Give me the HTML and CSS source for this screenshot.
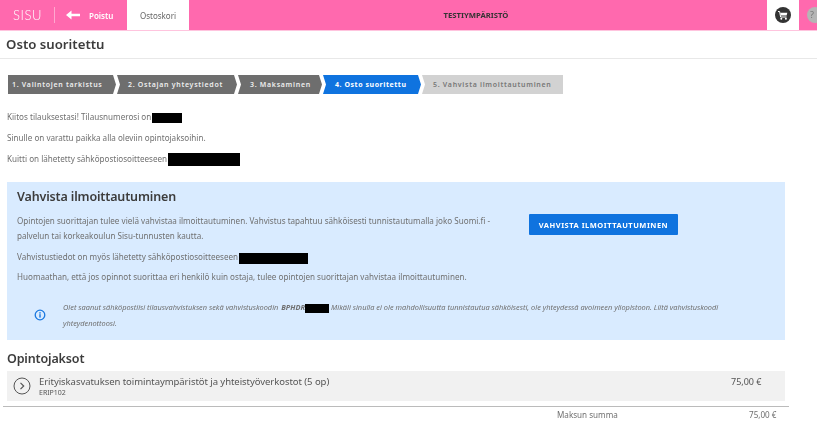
FILE: index.html
```html
<!DOCTYPE html>
<html>
<head>
    <meta charset="UTF-8">
    <meta name="viewport" content="width=device-width, initial-scale=1.0">
    <title>Osto suoritettu</title>
    <link rel="stylesheet" href="styles.css">
</head>
<body>
    <header class="topbar">
        <div class="logo">SISU</div>
        <a class="back">
            <svg width="14" height="10" viewBox="0 0 14 10"><path d="M0 5 L5.5 0.5 V3.8 H14 V6.2 H5.5 V9.5 Z" fill="#fff"/></svg>
            <span>Poistu</span>
        </a>
        <a class="tab">Ostoskori</a>
        <div class="env">TESTIYMPÄRISTÖ</div>
        <a class="cart">
            <svg width="16" height="16" viewBox="0 0 16 16">
                <circle cx="8" cy="8" r="8" fill="#333"/>
                <path d="M3 4.5 H4.6 L5.6 10 H11.6" fill="none" stroke="#fff" stroke-width="1"/>
                <path d="M5.2 5.7 H12.3 L11.6 8.4 H5.7 Z" fill="#fff"/>
                <circle cx="6.3" cy="11.8" r="1" fill="#fff"/>
                <circle cx="10.9" cy="11.8" r="1" fill="#fff"/>
            </svg>
        </a>
        <div class="help">?</div>
    </header>

    <h1 class="page-title">Osto suoritettu</h1>

    <main class="content">
        <ol class="steps">
            <li class="step done first">1. Valintojen tarkistus</li>
            <li class="step done second">2. Ostajan yhteystiedot</li>
            <li class="step done third">3. Maksaminen</li>
            <li class="step active">4. Osto suoritettu</li>
            <li class="step todo">5. Vahvista ilmoittautuminen</li>
        </ol>

        <section class="thanks">
            <p>Kiitos tilauksestasi! Tilausnumerosi on<span class="redact r-order"></span></p>
            <p>Sinulle on varattu paikka alla oleviin opintojaksoihin.</p>
            <p>Kuitti on lähetetty sähköpostiosoitteeseen <span class="redact r-mail"></span></p>
        </section>

        <section class="confirm">
            <h2>Vahvista ilmoittautuminen</h2>
            <div class="confirm-top">
                <div class="confirm-text">
                    <p>Opintojen suorittajan tulee vielä vahvistaa ilmoittautuminen. Vahvistus tapahtuu sähköisesti tunnistautumalla joko Suomi.fi -palvelun tai korkeakoulun Sisu-tunnusten kautta.</p>
                </div>
                <button class="confirm-btn">VAHVISTA ILMOITTAUTUMINEN</button>
            </div>
            <p class="gap">Vahvistustiedot on myös lähetetty sähköpostiosoitteeseen <span class="redact r-mail2"></span></p>
            <p class="gap last">Huomaathan, että jos opinnot suorittaa eri henkilö kuin ostaja, tulee opintojen suorittajan vahvistaa ilmoittautuminen.</p>
            <div class="notice">
                <svg class="notice-icon" width="12" height="12" viewBox="0 0 12 12">
                    <circle cx="6" cy="6" r="4.8" fill="none" stroke="#1a78e0" stroke-width="1.3"/>
                    <rect x="5.3" y="3.2" width="1.4" height="1.4" fill="#1a78e0"/>
                    <rect x="5.3" y="5.2" width="1.4" height="3.4" fill="#1a78e0"/>
                </svg>
                <p>Olet saanut sähköpostiisi tilausvahvistuksen sekä vahvistuskoodin <b>BPHDR</b><span class="redact r-code"></span> Mikäli sinulla ei ole mahdollisuutta tunnistautua sähköisesti, ole yhteydessä avoimeen yliopistoon. Liitä vahvistuskoodi yhteydenottoosi.</p>
            </div>
        </section>

        <h2 class="courses-title">Opintojaksot</h2>
        <div class="course">
            <span class="expand">
                <svg width="18" height="18" viewBox="0 0 18 18">
                    <circle cx="9" cy="9" r="8" fill="none" stroke="#555" stroke-width="1"/>
                    <path d="M7.5 5.8 L10.7 9 L7.5 12.2" fill="none" stroke="#555" stroke-width="1.2"/>
                </svg>
            </span>
            <div class="course-info">
                <div class="course-name">Erityiskasvatuksen toimintaympäristöt ja yhteistyöverkostot (5 op)</div>
                <div class="course-code">ERIP102</div>
            </div>
            <div class="course-price">75,00 €</div>
        </div>
        <div class="total">
            <span class="total-label">Maksun summa</span>
            <span class="total-value">75,00 €</span>
        </div>
    </main>
</body>
</html>
```

FILE: styles.css
```css
body {
    margin: 0;
    height: 425px;
    overflow: hidden;
    font-family: "Noto Sans", sans-serif;
    color: #707070;
    background: #fff;
    font-size: 8.1px;
    filter: blur(0.4px);
}
p {
    margin: 0;
}
.topbar {
    display: flex;
    align-items: stretch;
    height: 30px;
    background: #ff69ae;
    border-bottom: 1px solid #ffc4de;
    color: #fff;
}
.logo {
    width: 41px;
    margin: 7px 0 7px 13px;
    border-right: 1px solid #ffa8cf;
    font-size: 13px;
    line-height: 16px;
    letter-spacing: 0.6px;
    font-weight: 300;
    font-family: "Lato", sans-serif;
}
.back {
    display: flex;
    align-items: center;
    gap: 9px;
    margin-left: 11px;
    width: 61px;
    font-size: 8px;
    font-weight: 600;
}
.tab {
    display: flex;
    align-items: center;
    justify-content: center;
    width: 62px;
    background: #fff;
    color: #666;
    font-size: 8px;
}
.env {
    flex: 1;
    display: flex;
    align-items: center;
    justify-content: center;
    padding-right: 4px;
    color: #333;
    font-size: 7.7px;
    font-weight: 700;
}
.cart {
    display: flex;
    align-items: center;
    justify-content: center;
    width: 32px;
    background: #fff;
}
.help {
    width: 13px;
    height: 16px;
    padding-left: 3px;
    margin: 7px -6px 0 8px;
    flex: none;
    border-radius: 50%;
    background: #b5b5b5;
    color: #777;
    font-size: 9px;
    line-height: 16px;
}
.page-title {
    margin: 0;
    height: 27px;
    padding-left: 6px;
    border-bottom: 1px solid #e8e8e8;
    color: #3c3c3c;
    font-size: 13.2px;
    line-height: 27px;
    font-weight: 600;
}
.content {
    padding: 16px 32px 0 7px;
}
.steps {
    display: flex;
    gap: 1px;
    margin: 0 0 0 1px;
    padding: 0;
    list-style: none;
}
.step {
    display: flex;
    align-items: center;
    height: 19px;
    padding-left: 12px;
    box-sizing: border-box;
    font-size: 7px;
    font-weight: 600;
    letter-spacing: 0.7px;
    white-space: nowrap;
    color: #eee;
    clip-path: polygon(0 0, calc(100% - 3px) 0, 100% 50%, calc(100% - 3px) 100%, 0 100%, 3px 50%);
}
.done {
    background: #6e6e6e;
}
.first {
    width: 108px;
    padding-left: 4px;
    clip-path: polygon(0 0, calc(100% - 3px) 0, 100% 50%, calc(100% - 3px) 100%, 0 100%);
}
.second {
    width: 120px;
    padding-left: 11px;
}
.third {
    width: 84px;
}
.active {
    width: 98px;
    background: #0f73df;
    color: #fff;
    font-weight: 700;
    letter-spacing: 0.55px;
}
.todo {
    width: 141px;
    padding-left: 11px;
    background: #d2d2d2;
    color: #777;
    clip-path: polygon(0 0, 100% 0, 100% 100%, 0 100%, 3px 50%);
}
.thanks {
    display: flex;
    flex-direction: column;
    gap: 9px;
    margin-top: 17px;
    line-height: 12px;
}
.redact {
    display: inline-block;
    background: #000;
    vertical-align: middle;
}
.r-order {
    width: 30px;
    height: 10px;
    margin-left: 1px;
}
.r-mail {
    width: 72px;
    height: 13px;
    margin-left: -1px;
}
.r-mail2 {
    width: 69px;
    height: 11px;
    margin-left: -1px;
}
.r-code {
    width: 24px;
    height: 9px;
}
.confirm {
    margin-top: 16px;
    padding: 6px 10px 0;
    height: 158px;
    box-sizing: border-box;
    background: #d9ebff;
    line-height: 15px;
}
.confirm h2 {
    margin: 0 0 7px;
    color: #3c3c3c;
    font-size: 12.5px;
    letter-spacing: -0.15px;
    line-height: 18px;
    font-weight: 600;
}
.confirm-top {
    display: flex;
    align-items: flex-start;
}
.confirm-text {
    width: 480px;
}
.confirm-btn {
    margin: 1px 0 0 32px;
    width: 149px;
    height: 21px;
    padding: 0;
    border: 0;
    border-radius: 1px;
    background: #0f73df;
    color: #fff;
    font-family: inherit;
    font-size: 7.5px;
    font-weight: 700;
    letter-spacing: 0.5px;
}
.gap {
    margin-top: 6px;
}
.gap.last {
    margin-top: 5px;
}
.notice {
    display: flex;
    align-items: center;
    gap: 17px;
    margin-top: 15px;
    padding-left: 17px;
    font-size: 7.4px;
    font-style: italic;
    line-height: 16px;
}
.notice p {
    width: 665px;
}
.notice b {
    margin-left: 1px;
}
.notice-icon {
    flex: none;
}
.courses-title {
    margin: 9px 0 3px;
    color: #3c3c3c;
    font-size: 12.5px;
    letter-spacing: -0.15px;
    line-height: 19px;
    font-weight: 600;
}
.course {
    display: flex;
    align-items: center;
    height: 30px;
    background: #f1f1f1;
    color: #555;
}
.expand {
    display: flex;
    margin: 0 8px 0 6px;
}
.course-info {
    flex: 1;
}
.course-name {
    font-size: 9.5px;
    line-height: 13px;
    letter-spacing: -0.05px;
}
.course-code {
    font-size: 7px;
    line-height: 9px;
}
.course-price {
    width: 54px;
    margin-bottom: 9px;
    font-size: 9px;
}
.total {
    display: flex;
    margin: 5px -4px 0 -4px;
    padding-top: 2px;
    border-top: 1px solid #bbb;
    line-height: 11px;
}
.total-label {
    margin-left: 554px;
    width: 192px;
}
```
